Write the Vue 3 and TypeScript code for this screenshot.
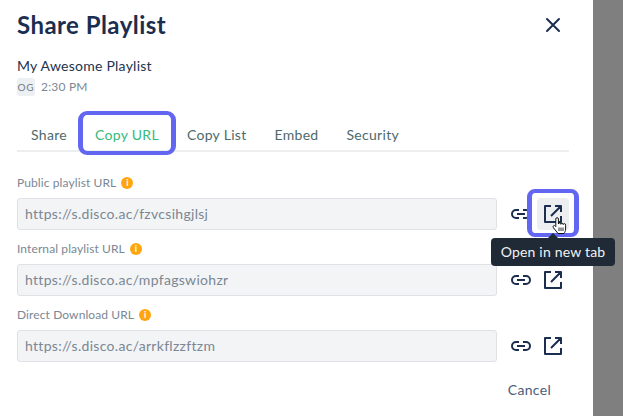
<script setup lang="ts">
const tabs = ['Share', 'Copy URL', 'Copy List', 'Embed', 'Security']
const rows = [
  { label: 'Public playlist URL', url: 'https://s.disco.ac/fzvcsihgjlsj', active: true },
  { label: 'Internal playlist URL', url: 'https://s.disco.ac/mpfagswiohzr', active: false },
  { label: 'Direct Download URL', url: 'https://s.disco.ac/arrkflzzftzm', active: false },
]
</script>

<template>
  <div class="page">
    <main class="modal">
      <header class="head">
        <h1>Share Playlist</h1>
        <svg class="close" width="16" height="16" viewBox="0 0 16 16" fill="none" stroke="#1b2e4f" stroke-width="2" stroke-linecap="round"><path d="M2 2l12 12M14 2L2 14" /></svg>
      </header>
      <div class="name">My Awesome Playlist</div>
      <div class="meta"><span class="avatar">OG</span><span>2:30 PM</span></div>
      <nav class="tabs">
        <span v-for="t in tabs" :key="t" class="tab" :class="{ on: t === 'Copy URL' }">{{ t }}</span>
      </nav>
      <section class="rows">
        <div v-for="r in rows" :key="r.label" class="row">
          <div class="label">{{ r.label }}<span class="info">i</span></div>
          <div class="line">
            <div class="input">{{ r.url }}</div>
            <svg class="link" width="20" height="10" viewBox="0 0 20 10" fill="none" stroke="#1b2e4f" stroke-width="2"><path d="M8 1H5a4 4 0 0 0 0 8h3M12 1h3a4 4 0 0 1 0 8h-3M6 5h8" /></svg>
            <div class="open" :class="{ active: r.active }">
              <svg width="18" height="18" viewBox="0 0 18 18" fill="none" stroke="#1b2e4f" stroke-width="2" stroke-linejoin="round"><path d="M7 1H1v16h16v-6M11 1h6v6M7 11L17 1" /></svg>
              <svg v-if="r.active" class="hand" width="16" height="17" viewBox="0 0 16 17"><path d="M3.800 8.500V2a1.300 1.300 0 0 1 2.600 0v5a1.200 1.200 0 0 1 2.400.3 1.200 1.200 0 0 1 2.400.3 1.200 1.200 0 0 1 2.400.6V12c0 2-.8 3.200-1.600 4.500H6L1.500 10.800c-.8-1-.4-2 .4-2.200.7-.2 1.400.1 1.900 1z" fill="#fff" stroke="#111" stroke-width="1" stroke-linejoin="round"/><path d="M7 10.500v3.500M9 10.500v3.500M11 10.500v3.500" stroke="#111" stroke-width=".9"/></svg>
              <div v-if="r.active" class="tip">Open in new tab</div>
            </div>
          </div>
        </div>
      </section>
      <footer class="foot"><span>Cancel</span></footer>
    </main>
    <aside class="shade"></aside>
  </div>
</template>

<style>
html, body { margin: 0; background: #fff; }
</style>

<style scoped>
.page { width: 623px; height: 416px; display: flex; overflow: hidden; font-family: Lato, "Open Sans", sans-serif; color: #1b2e4f; }
.modal { width: 593px; box-sizing: border-box; padding: 0 24px 0 17px; background: #fff; flex: none; }
.shade { flex: 1; background: #7f7f7f; }
.head { height: 50px; display: flex; align-items: center; justify-content: space-between; padding-right: 8px; }
h1 { margin: 0; font-size: 24px; line-height: 50px; font-weight: 700; letter-spacing: .45px; }
.name { margin-top: 7px; font-size: 14px; line-height: 18px; letter-spacing: .25px; color: #22344f; }
.meta { margin-top: 3px; display: flex; align-items: center; gap: 6px; font-size: 12px; line-height: 18px; color: #7b8794; letter-spacing: .2px; }
.avatar { width: 18px; height: 18px; background: #edf0f2; border-radius: 3px; font-size: 10px; letter-spacing: .8px; text-align: center; color: #6b7a8d; }
.tabs { margin-top: 14px; height: 42px; border-bottom: 2px solid #eceef0; display: flex; align-items: flex-end; padding: 0 0 7px 14px; gap: 28px; width: 552px; box-sizing: border-box; font-size: 14px; line-height: 17px; letter-spacing: .3px; color: #4d6a6a; }
.tab { position: relative; }
.tab.on { color: #35b97c; }
.tab.on::before { content: ""; position: absolute; inset: -15px -17px -12px -17px; border-style: solid; border-color: #6366f1; border-width: 4px 5px; border-radius: 9px; }
.rows { margin-top: 21px; }
.row { height: 66px; }
.label { height: 25px; font-size: 12px; line-height: 20px; color: #7b8794; letter-spacing: .1px; display: flex; gap: 5px; }
.info { width: 12px; height: 12px; margin-top: 4px; border-radius: 50%; background: #ffa50f; color: #fff; font-size: 9px; line-height: 12px; font-weight: 700; text-align: center; }
.line { display: flex; align-items: center; }
.input { flex: none; width: 480px; height: 32px; box-sizing: border-box; border: 1px solid #dfe1e4; border-radius: 3px; background: #f3f4f6; padding: 0 7px; font-size: 14px; line-height: 30px; letter-spacing: .3px; color: #7b8794; }
.link { flex: none; margin-left: 14px; }
.open { flex: none; position: relative; margin-left: 6px; width: 32px; height: 32px; display: flex; align-items: center; justify-content: center; border-radius: 4px; }
.open.active { background: #eceef0; }
.open.active::before { content: ""; position: absolute; inset: -9px -10px -7px -10px; border-style: solid; border-color: #6366f1; border-width: 4px 5px; border-radius: 8px; }
.hand { position: absolute; left: 15px; top: 19px; z-index: 2; }
.tip { position: absolute; left: -46px; top: 40px; width: 124px; height: 28px; border-radius: 4px; background: #1f2a36; color: #f2f3f5; font-size: 14px; line-height: 28px; text-align: center; letter-spacing: .2px; z-index: 1; white-space: nowrap; }
.tip::before { content: ""; position: absolute; left: 57px; top: -5px; border: 5px solid transparent; border-top: 0; border-bottom-color: #1f2a36; }
.foot { text-align: right; font-size: 14px; line-height: 18px; color: #4a5d78; margin-top: 10px; padding-right: 18px; letter-spacing: .3px; }
</style>
